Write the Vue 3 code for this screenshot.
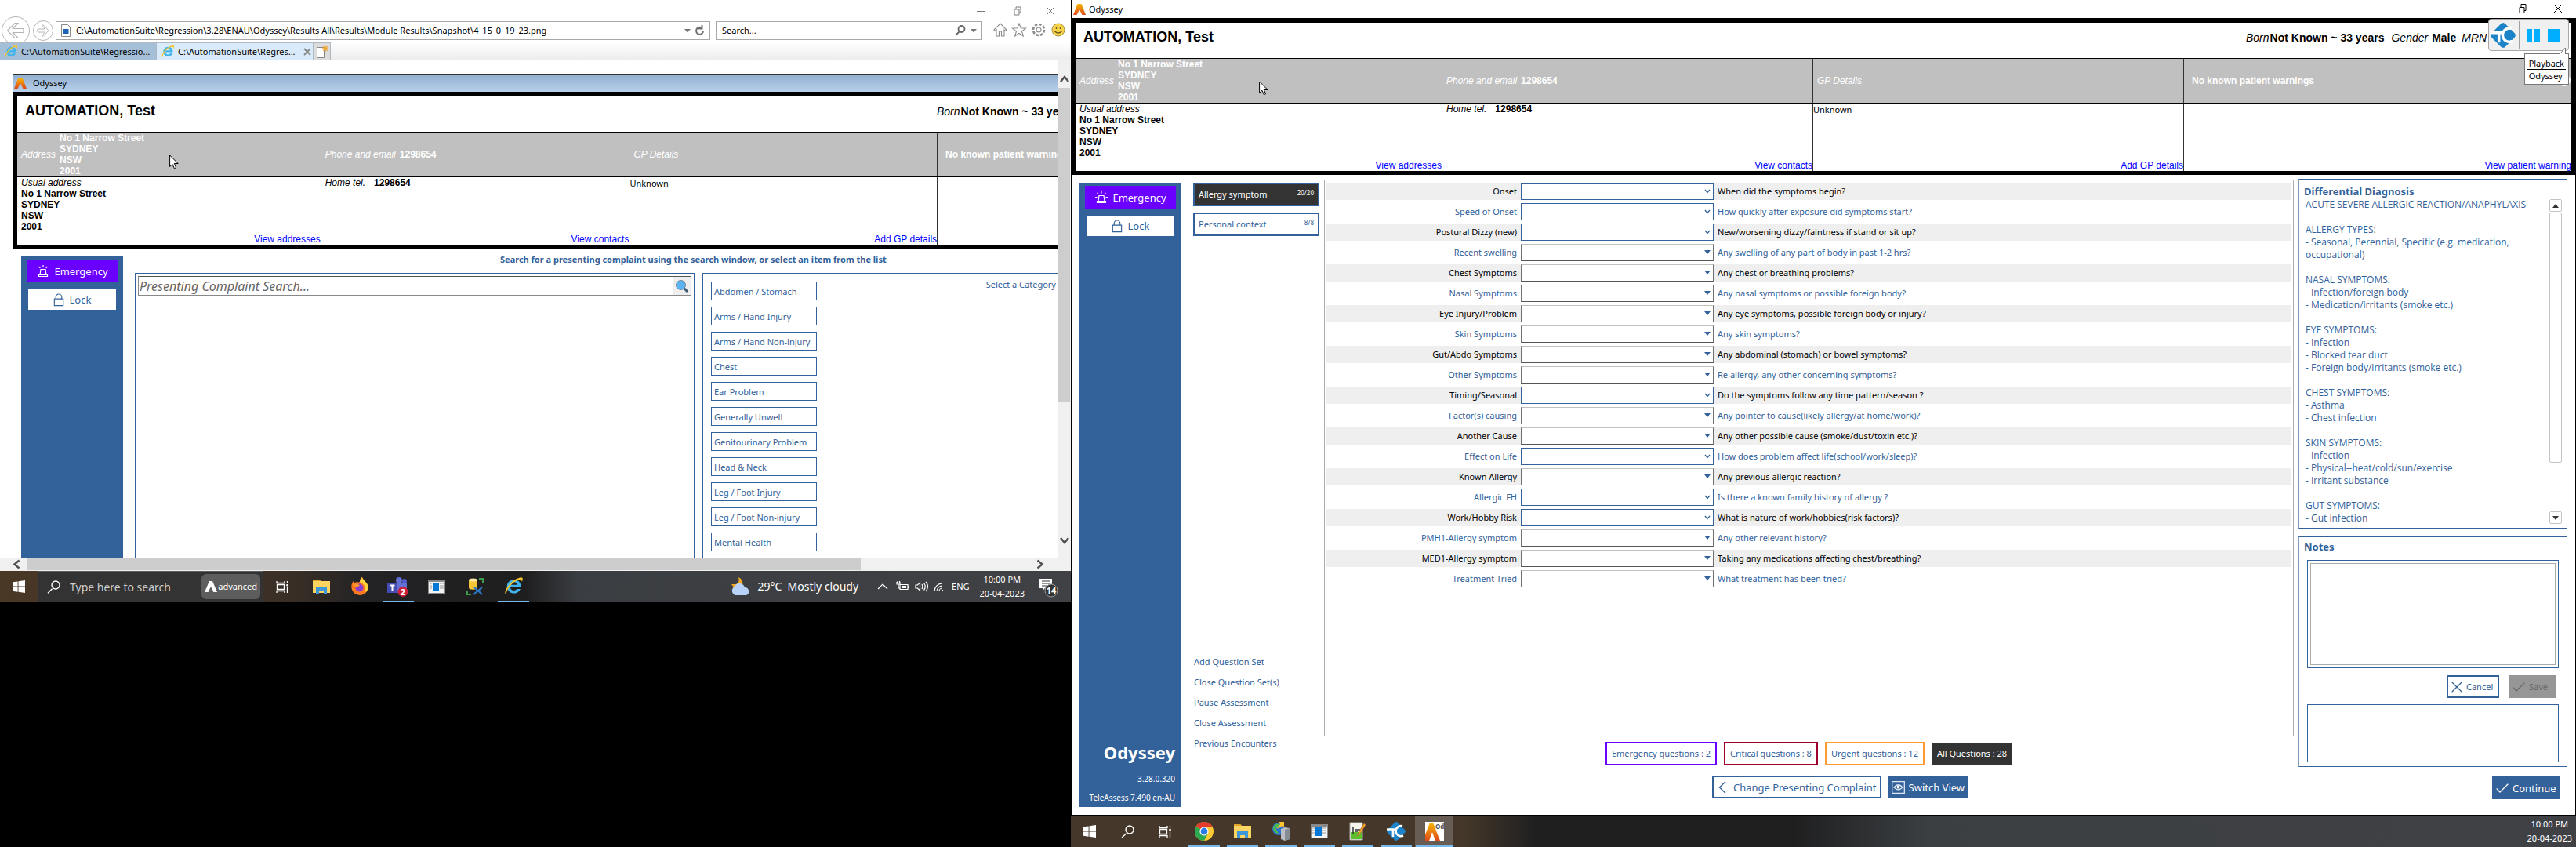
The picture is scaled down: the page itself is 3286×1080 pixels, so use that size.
<script setup>
const addressLines = ['No 1 Narrow Street', 'SYDNEY', 'NSW', '2001']

const categories = [
  'Abdomen / Stomach', 'Arms / Hand Injury', 'Arms / Hand Non-injury', 'Chest',
  'Ear Problem', 'Generally Unwell', 'Genitourinary Problem', 'Head & Neck',
  'Leg / Foot Injury', 'Leg / Foot Non-injury', 'Mental Health'
]

// kind "single" is a blue box with a chevron, "multi" a grey box with a filled arrow
const questions = [
  { label: 'Onset', text: 'When did the symptoms begin?', kind: 'single' },
  { label: 'Speed of Onset', text: 'How quickly after exposure did symptoms start?', kind: 'single' },
  { label: 'Postural Dizzy (new)', text: 'New/worsening dizzy/faintness if stand or sit up?', kind: 'single' },
  { label: 'Recent swelling', text: 'Any swelling of any part of body in past 1-2 hrs?', kind: 'multi' },
  { label: 'Chest Symptoms', text: 'Any chest or breathing problems?', kind: 'multi' },
  { label: 'Nasal Symptoms', text: 'Any nasal symptoms or possible foreign body?', kind: 'multi' },
  { label: 'Eye Injury/Problem', text: 'Any eye symptoms, possible foreign body or injury?', kind: 'multi' },
  { label: 'Skin Symptoms', text: 'Any skin symptoms?', kind: 'multi' },
  { label: 'Gut/Abdo Symptoms', text: 'Any abdominal (stomach) or bowel symptoms?', kind: 'multi' },
  { label: 'Other Symptoms', text: 'Re allergy, any other concerning symptoms?', kind: 'multi' },
  { label: 'Timing/Seasonal', text: 'Do the symptoms follow any time pattern/season ?', kind: 'single' },
  { label: 'Factor(s) causing', text: 'Any pointer to cause(likely allergy/at home/work)?', kind: 'multi' },
  { label: 'Another Cause', text: 'Any other possible cause (smoke/dust/toxin etc.)?', kind: 'multi' },
  { label: 'Effect on Life', text: 'How does problem affect life(school/work/sleep)?', kind: 'single' },
  { label: 'Known Allergy', text: 'Any previous allergic reaction?', kind: 'multi' },
  { label: 'Allergic FH', text: 'Is there a known family history of allergy ?', kind: 'single' },
  { label: 'Work/Hobby Risk', text: 'What is nature of work/hobbies(risk factors)?', kind: 'single' },
  { label: 'PMH1-Allergy symptom', text: 'Any other relevant history?', kind: 'multi' },
  { label: 'MED1-Allergy symptom', text: 'Taking any medications affecting chest/breathing?', kind: 'multi' },
  { label: 'Treatment Tried', text: 'What treatment has been tried?', kind: 'multi' }
]

const actions = ['Add Question Set', 'Close Question Set(s)', 'Pause Assessment', 'Close Assessment', 'Previous Encounters']

const diagnoses = [
  { title: 'ACUTE SEVERE ALLERGIC REACTION/ANAPHYLAXIS', items: [] },
  { title: 'ALLERGY TYPES:', items: ['- Seasonal, Perennial, Specific (e.g. medication, occupational)'] },
  { title: 'NASAL SYMPTOMS:', items: ['- Infection/foreign body', '- Medication/irritants (smoke etc.)'] },
  { title: 'EYE SYMPTOMS:', items: ['- Infection', '- Blocked tear duct', '- Foreign body/irritants (smoke etc.)'] },
  { title: 'CHEST SYMPTOMS:', items: ['- Asthma', '- Chest infection'] },
  { title: 'SKIN SYMPTOMS:', items: ['- Infection', '- Physical--heat/cold/sun/exercise', '- Irritant substance'] },
  { title: 'GUT SYMPTOMS:', items: ['- Gut infection'] }
]

const filePath = 'C:\\AutomationSuite\\Regression\\3.28\\ENAU\\Odyssey\\Results All\\Results\\Module Results\\Snapshot\\4_15_0_19_23.png'
</script>

<template>
  <svg class="defs" aria-hidden="true">
    <defs>
      <linearGradient id="flame" x1="0" y1="0" x2="0" y2="1">
        <stop offset="0" stop-color="#f9b700" /><stop offset="1" stop-color="#dd4a1c" />
      </linearGradient>
      <symbol id="i-logo" viewBox="0 0 16 14"><path d="M5.500 0h5L16 14h-4.500L8 7.500 4.500 14H0z" fill="url(#flame)" /></symbol>
      <symbol id="i-siren" viewBox="0 0 18 18">
        <g fill="none" stroke="#fff" stroke-width="1.200">
          <path d="M3.500 15.500h11v-2h-11zM5 13.500l1-7h6l1 7M9 1v2.500M3.500 3l1.800 1.800M14.500 3l-1.800 1.800M1 8.500h2.500M14.500 8.500H17" />
        </g>
      </symbol>
      <symbol id="i-lock" viewBox="0 0 14 18">
        <path d="M1 7.500h12v9H1zM3 7.500V5a4 4 0 0 1 8 0v2.500" fill="none" stroke="#336199" stroke-width="1.200" />
      </symbol>
      <symbol id="i-cursor" viewBox="0 0 12 19">
        <path d="M.6 1v14.500l3.400-3.200 2.300 5.400 2.300-1-2.300-5.200h4.800z" fill="#fff" stroke="#000" />
      </symbol>
      <symbol id="i-win" viewBox="0 0 16 16">
        <path d="M0 2.300 6.600 1.400v6.200H0zM7.500 1.200 16 0v7.600H7.500zM0 8.500h6.600v6.200L0 13.800zM7.500 8.500H16V16l-8.500-1.200z" fill="#fff" />
      </symbol>
      <symbol id="i-find" viewBox="0 0 17 17">
        <path d="M6.500 10.800 1 16.300M16 6A5 5 0 1 1 6 6a5 5 0 0 1 10 0z" fill="none" stroke="#fff" stroke-width="1.400" />
      </symbol>
      <symbol id="i-tasks" viewBox="0 0 17 17">
        <path d="M1 1v2.500h10V1M1 16v-2.500h10V16M1.500 5.500h9v6h-9zM14.500 1v2.500M14.500 8.500V16" fill="none" stroke="#fff" stroke-width="1.300" />
        <path d="M13.300 5h2.500v2.500h-2.500z" fill="#fff" />
      </symbol>
      <symbol id="i-folder" viewBox="0 0 22 20">
        <path d="M0 1h8l2 2h12v15H0z" fill="#fcd462" /><path d="M0 1h8l2 2H0z" fill="#e0a32a" />
        <path d="M4 10h14v9h-4v-4H8v4H4z" fill="#3e97d8" />
      </symbol>
      <symbol id="i-panel" viewBox="0 0 22 18">
        <path d="M0 0h22v18H0z" fill="#8a8a8a" /><path d="M1 3h20v14H1z" fill="#f4f4f4" />
        <path d="M6 4h8v11H6z" fill="#0078d7" /><path d="M2 5h3M2 8h3M2 11h3M15 5h5M15 8h5M15 11h5" stroke="#999" />
      </symbol>
      <symbol id="i-ie" viewBox="0 0 22 22">
        <path d="M18.500 13.500A7.500 7.500 0 1 1 19 10.500v1.200H7.500a4 4 0 0 0 7.300 1.800zM7.500 9h7.300a3.700 3.700 0 0 0-7.300 0z" fill="#3fb4ec" fill-rule="evenodd" />
        <path d="M3 20C-1 17 8 3 19 1c3 0 2 3 1 5 0-2-1-3-3-2.500C10 5.500 3 14 3 20z" fill="#f5c52b" />
      </symbol>
      <symbol id="i-tc" viewBox="0 0 24 24">
        <path d="M12 0a3 3 0 0 1 2 1l9 9a3 3 0 0 1 0 4l-9 9a3 3 0 0 1-4 0l-9-9a3 3 0 0 1 0-4l9-9a3 3 0 0 1 2-1z" fill="#1c83c8" />
        <path d="M0 9.500h12M8 9.500V19M20 5.500a6.500 6.500 0 1 0 1 12" fill="none" stroke="#fff" stroke-width="2.600" />
      </symbol>
      <symbol id="i-tick" viewBox="0 0 16 12"><path d="M.7 6.500 5 11 15.300.8" fill="none" stroke="currentColor" stroke-width="1.300" /></symbol>
      <symbol id="i-up" viewBox="0 0 12 9"><path d="M1 8l5-6 5 6" fill="none" stroke="#505050" stroke-width="2.500" /></symbol>
    </defs>
  </svg>

  <main class="screens">
    <!-- left monitor: browser showing a saved snapshot -->
    <section class="monitor small">
      <div class="browser">
        <div class="chrome">
          <div class="caption">
            <svg width="102" height="14" viewBox="0 0 102 14"><path d="M1 7.500h10M49 5h6v7h-6zM51 5V2h6v7h-2M90 2l10 10M100 2 90 12" fill="none" stroke="#7a7a7a" /></svg>
          </div>
          <div class="address">
            <button class="nav back" aria-label="Back"><svg width="24" height="22" viewBox="0 0 24 22"><path d="M11 1.500 1.500 11l9.500 9.500h4L8.500 13.500H22v-5H8.500L15 1.500z" fill="none" stroke="#b4b4b4" stroke-width="1.200" /></svg></button>
            <button class="nav fwd" aria-label="Forward"><svg width="16" height="16" viewBox="0 0 16 16"><path d="M8.500 1 15 8l-6.500 7H6l4.500-5H1V6h9.500L6 1z" fill="none" stroke="#b4b4b4" /></svg></button>
            <div class="field url">
              <svg width="12" height="16" viewBox="0 0 12 16"><path d="M.5.500h8l3 3v12H.5z" fill="#fff" stroke="#8a8a8a" /><path d="M2.500 6h7v6h-7z" fill="#1e62b8" /></svg>
              <input aria-label="Address" :value="filePath" readonly />
              <svg width="28" height="14" viewBox="0 0 28 14"><path d="M2 5h8L6 9.500z" fill="#777" /><path d="M26 8a4.500 4.500 0 1 1-2-4.500M24.500 0v4.500H20" fill="none" stroke="#707070" stroke-width="2" /></svg>
            </div>
            <div class="field find">
              <input aria-label="Search" value="Search..." />
              <svg width="28" height="14" viewBox="0 0 28 14"><path d="M12.500 5A4 4 0 1 1 4.500 5a4 4 0 0 1 8 0zM5.500 8.500 1 13" fill="none" stroke="#666" stroke-width="1.800" /><path d="M20 5h8l-4 4.500z" fill="#777" /></svg>
            </div>
            <svg class="tools" width="92" height="18" viewBox="0 0 92 18">
              <g fill="none" stroke="#8a8a8a" stroke-width="1.100">
                <path d="M1 9 9 1l8 8-1.500 1.500L14 9v8h-3.500v-6h-3v6H4V9l-1.500 1.500z" />
                <path d="m33 1 2.200 5.800 6.300.3-5 3.900 1.800 6L33 13.500 27.700 17l1.800-6-5-3.900 6.300-.3z" />
                <circle cx="58" cy="9" r="3" /><circle cx="58" cy="9" r="7" stroke-width="2.600" stroke-dasharray="3.500 2" />
              </g>
              <circle cx="83" cy="9" r="8" fill="#f7d34a" stroke="#a8923c" /><path d="M80.500 5v3M85.500 5v3M78.500 11q4.500 4 9 0" fill="none" stroke="#6d5a1c" stroke-width="1.300" />
            </svg>
          </div>
          <div class="tabs">
            <button class="tab"><svg width="18" height="18"><use href="#i-ie" /></svg>C:\AutomationSuite\Regressio...</button>
            <button class="tab on"><svg width="18" height="18"><use href="#i-ie" /></svg>C:\AutomationSuite\Regres...<svg class="x" width="10" height="10" viewBox="0 0 10 10"><path d="m1 1 8 8M9 1 1 9" stroke="#888" stroke-width="2" /></svg></button>
            <button class="tab new" aria-label="New tab"><svg width="16" height="16" viewBox="0 0 16 16"><path d="M1.500 2.500h9v13h-9z" fill="#fff" stroke="#888" /><path d="M12 0v8M8 4h8M9.200 1.200l5.600 5.600M14.800 1.200 9.200 6.800" stroke="#f0a93a" stroke-width="1.300" /></svg></button>
          </div>
        </div>

        <div class="view">
          <div class="shot">
            <div class="shot-title"><svg width="16" height="14"><use href="#i-logo" /></svg>Odyssey</div>
            <div class="patient">
              <header><h1>AUTOMATION, Test</h1><p><i class="born">Born</i><b>Not Known ~ 33 years</b></p></header>
              <div class="cells heads">
                <div><i>Address</i><b class="addr"><span v-for="l in addressLines" :key="l">{{ l }}</span></b></div>
                <div><i>Phone and email</i><b>1298654</b></div>
                <div><i>GP Details</i></div>
                <div class="warn"><b>No known patient warnings</b></div>
              </div>
              <div class="cells">
                <div><i>Usual address</i><b v-for="l in addressLines" :key="l">{{ l }}</b><a href="#">View addresses</a></div>
                <div><p><i>Home tel.</i><b class="tel">1298654</b></p><a href="#">View contacts</a></div>
                <div class="gp"><p>Unknown</p><a href="#">Add GP details</a></div>
                <div></div>
              </div>
              <svg class="cursor" width="12" height="19"><use href="#i-cursor" /></svg>
            </div>
            <div class="complaint">
              <nav class="side">
                <button class="emergency"><svg width="18" height="18"><use href="#i-siren" /></svg>Emergency</button>
                <button class="lock"><svg width="14" height="17"><use href="#i-lock" /></svg>Lock</button>
              </nav>
              <div class="finder">
                <p class="hint">Search for a presenting complaint using the search window, or select an item from the list</p>
                <div class="panels">
                  <div class="box">
                    <div class="pc">
                      <input aria-label="Presenting complaint" placeholder="Presenting Complaint Search..." />
                      <button aria-label="Search"><svg width="18" height="18" viewBox="0 0 18 18"><path d="m11 11 5 5" stroke="#3b5a76" stroke-width="3" /><circle cx="7.500" cy="7.500" r="6" fill="#5cb4f5" stroke="#6d8295" /></svg></button>
                    </div>
                  </div>
                  <div class="box cats">
                    <div class="list"><button v-for="c in categories" :key="c">{{ c }}</button></div>
                    <span>Select a Category</span>
                  </div>
                </div>
              </div>
            </div>
          </div>
          <div class="vbar"><svg width="12" height="9"><use href="#i-up" /></svg><div class="thumb"></div><svg class="down" width="12" height="9"><use href="#i-up" /></svg></div>
        </div>
        <div class="hbar"><svg class="left" width="12" height="9"><use href="#i-up" /></svg><div class="thumb"></div><svg class="right" width="12" height="9"><use href="#i-up" /></svg></div>
      </div>

      <footer class="taskbar">
        <button class="t48" aria-label="Start"><svg width="16" height="16"><use href="#i-win" /></svg></button>
        <div class="search">
          <svg width="17" height="17"><use href="#i-find" /></svg>
          <input aria-label="Taskbar search" value="Type here to search" />
          <span class="adv"><svg width="16" height="14" viewBox="0 0 16 14"><path d="M6 0h4l6 14h-4.500L8 7 4.500 14H0z" fill="#fff" /></svg>advanced</span>
        </div>
        <button class="t49" aria-label="Task view"><svg width="17" height="17"><use href="#i-tasks" /></svg></button>
        <button class="t49" aria-label="Explorer"><svg width="22" height="20"><use href="#i-folder" /></svg></button>
        <button class="t49" aria-label="Firefox"><svg width="24" height="24" viewBox="0 0 24 24"><path d="M12 23A11 11 0 0 1 1.500 10c.5-2.500 1.500-4 2.500-5 .3 1.200.8 1.800 1.500 2.200C8 5.500 10 7 12 6c0-2.500 1-4.500 3-6 .5 3 4 5 6 8 4 7-1 15-9 15z" fill="#ff7a1f" /><path d="M15 0c.5 3 4 5 6 8 3 5 1 10-3 12 3-7 0-11-6-14 0-2.500 1-4.500 3-6z" fill="#ffd23e" /><circle cx="11.500" cy="13.500" r="5" fill="#8b3fd1" /><path d="M5 9c3-1 6 0 7 2-2 0-3 1-3 2-2 0-4-2-4-4z" fill="#ff9a2a" /></svg></button>
        <button class="t49 run" aria-label="Teams"><svg width="27" height="25" viewBox="0 0 27 25"><circle cx="15" cy="4" r="4" fill="#6470d6" /><circle cx="22" cy="5" r="3" fill="#525ccd" /><path d="M10 8h15v8a5 5 0 0 1-8 4h-7z" fill="#6470d6" /><path d="M0 7h13v13H0z" fill="#454db4" /><path d="M3.500 10.500h6M6.500 10.500V17" stroke="#fff" stroke-width="2" /><circle cx="20" cy="18.500" r="6.500" fill="#cb1f3a" /><text x="20" y="22.500" text-anchor="middle" fill="#fff" class="tiny">2</text></svg></button>
        <button class="t49" aria-label="Control panel"><svg width="22" height="18"><use href="#i-panel" /></svg></button>
        <button class="t49" aria-label="Database tool"><svg width="22" height="23" viewBox="0 0 22 23"><path d="M3 2.500v10c0 3 11 3 11 0v-10z" fill="#f5c437" /><ellipse cx="8.500" cy="2.500" rx="5.500" ry="2" fill="#ffe9a0" /><path d="M16 1h5v5M1 16v5h5" fill="none" stroke="#3c9c4a" stroke-width="2" /><path d="m9 21 11-9M10 12l10 9" stroke="#2c78c8" stroke-width="2.200" /></svg></button>
        <button class="t49 run" aria-label="Internet Explorer"><svg width="26" height="26"><use href="#i-ie" /></svg></button>
        <div class="tray">
          <svg width="26" height="24" viewBox="0 0 26 24"><path d="M10 0c6 3 7 9 3 13H4l-3-4h6c4-2 4-5 3-9z" fill="#f5a623" /><path d="M6 23a6 6 0 0 1-1-11 7 7 0 0 1 13 1 5.200 5.200 0 0 1 2 10z" fill="#b9d2f7" /></svg>
          <span class="weather">29°C&nbsp; Mostly cloudy</span>
          <svg width="84" height="16" viewBox="0 0 84 16">
            <g fill="none" stroke="#fff" stroke-width="1.200">
              <path d="m1 11 6-6 6 6M29 5.500h10v6H29zM25 2v3h4V2M26 1v2M28.500 1v2M27 5v5h2M49 6h2.500l3-3v10l-3-3H49zM57 5q2 3 0 6M59.500 3.500q3.500 4.500 0 9M62 2q5 6 0 12M73 14A10 10 0 0 1 83 4M76 14a7 7 0 0 1 7-7M79 14a4 4 0 0 1 4-4" />
            </g>
            <path d="M31 7h6v3h-6zM39 7h2v3h-2zM82 12h2v2h-2z" fill="#fff" />
          </svg>
          <span class="lang">ENG</span>
          <span class="clock"><span>10:00 PM</span><span>20-04-2023</span></span>
          <svg class="note" width="26" height="27" viewBox="0 0 26 27"><path d="M1 3h16v12H8l-3 3v-3H1z" fill="#fff" /><path d="M4 6h10M4 9h10M4 12h7" stroke="#333" /><circle cx="16" cy="18" r="8" fill="#333" stroke="#999" /><text x="16" y="22" text-anchor="middle" fill="#fff" class="tiny">14</text></svg>
        </div>
      </footer>
    </section>

    <!-- right monitor: the live application -->
    <section class="monitor large">
      <div class="app-title">
        <svg width="16" height="14"><use href="#i-logo" /></svg><span>Odyssey</span>
        <svg class="wc" width="102" height="14" viewBox="0 0 102 14"><path d="M1 7.500h10M47 5.500h6v7h-6zM49 5.500v-4h6v8h-2M91 2l10 10M101 2 91 12" fill="none" stroke="#000" /></svg>
      </div>
      <div class="patient wide">
        <header><h1>AUTOMATION, Test</h1><p><i class="born">Born</i><b>Not Known ~ 33 years</b><i class="gap">Gender</i><b class="sm">Male</b><i class="sm2">MRN</i> <i>no.</i></p></header>
        <div class="cells heads">
          <div><i>Address</i><b class="addr"><span v-for="l in addressLines" :key="l">{{ l }}</span></b></div>
          <div><i>Phone and email</i><b>1298654</b></div>
          <div><i>GP Details</i></div>
          <div class="warn"><b>No known patient warnings</b><span class="pin"></span></div>
        </div>
        <div class="cells">
          <div><i>Usual address</i><b v-for="l in addressLines" :key="l">{{ l }}</b><a href="#">View addresses</a></div>
          <div><p><i>Home tel.</i><b class="tel">1298654</b></p><a href="#">View contacts</a></div>
          <div class="gp"><p>Unknown</p><a href="#">Add GP details</a></div>
          <div><a href="#">View patient warning</a></div>
        </div>
        <svg class="cursor" width="12" height="19"><use href="#i-cursor" /></svg>
        <div class="playback">
          <div class="pb-bar">
            <svg width="32" height="32"><use href="#i-tc" /></svg>
            <span class="sep"></span>
            <button aria-label="Pause"><svg width="16" height="16"><path d="M0 0h6v16H0zM9 0h7v16H9z" fill="#00aeff" /></svg></button>
            <button aria-label="Stop"><svg width="16" height="16"><path d="M0 0h16v16H0z" fill="#00aeff" /></svg></button>
          </div>
          <svg class="tip" width="8" height="8" viewBox="0 0 8 8"><path d="M0 8 7.500 0v8" fill="#fff" stroke="#777" /></svg>
          <div class="pb-note"><span>Playback</span><span>Odyssey</span></div>
        </div>
      </div>

      <div class="work">
        <nav class="side">
          <button class="emergency"><svg width="18" height="18"><use href="#i-siren" /></svg>Emergency</button>
          <button class="lock"><svg width="14" height="17"><use href="#i-lock" /></svg>Lock</button>
          <div class="about"><strong>Odyssey</strong><span>3.28.0.320</span><span>TeleAssess 7.490 en-AU</span></div>
        </nav>
        <div class="sets">
          <button class="on">Allergy symptom<small>20/20</small></button>
          <button>Personal context<small>8/8</small></button>
          <ul><li v-for="a in actions" :key="a"><a href="#">{{ a }}</a></li></ul>
        </div>
        <div class="centre">
          <form class="questions">
            <div v-for="(q, i) in questions" :key="q.label" class="q">
              <label :for="'q' + i">{{ q.label }}</label>
              <div class="pick" :class="q.kind">
                <select :id="'q' + i"></select>
                <svg v-if="q.kind === 'single'" width="8" height="6" viewBox="0 0 8 6"><path d="M1 1l3 3.500L7 1" fill="none" stroke="#336199" stroke-width="1.300" /></svg>
                <svg v-else width="8" height="5" viewBox="0 0 8 5"><path d="M0 0h8L4 5z" fill="#336199" /></svg>
              </div>
              <span>{{ q.text }}</span>
            </div>
          </form>
          <div class="filters">
            <button class="f1">Emergency questions : 2</button>
            <button class="f2">Critical questions : 8</button>
            <button class="f3">Urgent questions : 12</button>
            <button class="f4">All Questions : 28</button>
          </div>
          <div class="moves">
            <button class="line"><svg width="11" height="16" viewBox="0 0 11 16"><path d="M9 .7 1.500 8 9 15.300" fill="none" stroke="#336199" stroke-width="1.400" /></svg>Change Presenting Complaint</button>
            <button class="solid"><svg width="17" height="16" viewBox="0 0 17 16"><path d="M.7.700h15.600v14.600H.7zM3 8q5.500-6.500 11 0Q8.500 13.500 3 8z" fill="none" stroke="#dfe8f2" stroke-width="1.300" /><circle cx="8.500" cy="7.500" r="2" fill="#fff" /></svg>Switch View</button>
          </div>
        </div>
        <aside>
          <div class="card dd">
            <h2>Differential Diagnosis</h2>
            <div class="scroll">
              <div class="dx">
                <div v-for="d in diagnoses" :key="d.title" class="grp"><p>{{ d.title }}</p><p v-for="t in d.items" :key="t">{{ t }}</p></div>
              </div>
              <div class="sb">
                <button aria-label="Scroll up"><svg width="8" height="5"><path d="M0 5h8L4 0z" fill="#333" /></svg></button>
                <div></div>
                <button aria-label="Scroll down"><svg width="8" height="5"><path d="M0 0h8L4 5z" fill="#333" /></svg></button>
              </div>
            </div>
          </div>
          <div class="card notes">
            <h2 id="notes">Notes</h2>
            <div class="edit"><textarea aria-labelledby="notes"></textarea></div>
            <div class="acts">
              <button class="line"><svg width="14" height="14" viewBox="0 0 14 14"><path d="m.7.700 12.600 12.600M13.300.700.700 13.300" stroke="#336199" stroke-width="1.300" /></svg>Cancel</button>
              <button class="save" disabled><svg width="16" height="12"><use href="#i-tick" /></svg>Save</button>
            </div>
            <div class="saved"></div>
          </div>
          <button class="solid go"><svg width="16" height="12"><use href="#i-tick" /></svg>Continue</button>
        </aside>
      </div>

      <footer class="taskbar">
        <button class="t48" aria-label="Start"><svg width="16" height="16"><use href="#i-win" /></svg></button>
        <button class="t48" aria-label="Search"><svg width="17" height="17"><use href="#i-find" /></svg></button>
        <button class="t49" aria-label="Task view"><svg width="17" height="17"><use href="#i-tasks" /></svg></button>
        <button class="t49 run" aria-label="Chrome"><svg width="24" height="24" viewBox="0 0 24 24"><circle cx="12" cy="12" r="12" fill="#fcc934" /><path d="M12 12 1.600 6A12 12 0 0 1 22.400 6H12z" fill="#e33b2e" /><path d="M1.600 6A12 12 0 0 0 12 24l5-9-5-3z" fill="#2da94f" /><circle cx="12" cy="12" r="5.600" fill="#fff" /><circle cx="12" cy="12" r="4.400" fill="#2a7ae8" /></svg></button>
        <button class="t49 run" aria-label="Explorer"><svg width="22" height="20"><use href="#i-folder" /></svg></button>
        <button class="t49 run" aria-label="Remote server"><svg width="24" height="24" viewBox="0 0 24 24"><circle cx="9" cy="9" r="8" fill="#2d74cf" /><path d="M2 6q4-5 8-3-1 4-5 4 1 4 4 8-7-1-7-9z" fill="#4cbf45" /><path d="M9 0h7v7l-2-2q-4 4-8 3 4-2 5-5z" fill="#ffc32e" /><path d="m12 9 5-2 6 1v14l-6 2-5-2z" fill="#b9bec4" /><path d="M17 10v14l6-2V8z" fill="#868c93" /></svg></button>
        <button class="t49 run" aria-label="Control panel"><svg width="22" height="18"><use href="#i-panel" /></svg></button>
        <button class="t49 run" aria-label="Notepad++"><svg width="22" height="24" viewBox="0 0 22 24"><path d="M1 1h16v22H1z" fill="#f4f6ee" stroke="#aaa" /><path d="M2 13h14v9H2z" fill="#5fbf2d" /><path d="M5 7v8M8 10h7M8 12h3" stroke="#333" stroke-width="1.500" /><path d="m10 18 2-5 7-11 2 2-7 11z" fill="#f0a41c" stroke="#a55" stroke-width=".5" /></svg></button>
        <button class="t49 run" aria-label="TestComplete"><svg width="24" height="24"><use href="#i-tc" /></svg></button>
        <button class="t49 run on" aria-label="Odyssey"><svg width="24" height="24" viewBox="0 0 24 24"><path d="M0 0h24v24H0z" fill="#fff" /><path d="M6 1h4l9 23h-6L9 13 5 24H0V16z" fill="url(#flame)" /><text x="13" y="9" class="od">Od</text></svg></button>
        <div class="tray"><span class="clock"><span>10:00 PM</span><span>20-04-2023</span></span></div>
      </footer>
    </section>
  </main>
</template>

<style>
body { background: #000; }
</style>

<style scoped>
.defs { position: absolute; width: 0; height: 0; }
* { box-sizing: border-box; }
h1, h2, p, ul { margin: 0; padding: 0; }
ul { list-style: none; }
a { text-decoration: none; }
svg { flex: none; }
button, input, select, textarea { font: inherit; color: inherit; margin: 0; padding: 0; border: 0; background: none; border-radius: 0; outline: 0; min-width: 0; }
button { display: flex; align-items: center; white-space: nowrap; }

.screens { display: grid; grid-template-columns: 1366fr 1920fr; align-items: start; background: #000; font: 11px/14px "Noto Sans", "Open Sans", sans-serif; color: #000; }
.monitor { display: flex; flex-direction: column; min-width: 0; overflow: hidden; background: #fff; }
.small { aspect-ratio: 1366 / 768; }
.large { aspect-ratio: 1920 / 1080; }

/* browser */
.browser { flex: 1; min-height: 0; display: flex; flex-direction: column; }
.caption { display: flex; justify-content: flex-end; height: 27px; padding: 7px 19px 0 0; }
.address { display: flex; align-items: flex-start; height: 27px; padding-left: 2px; position: relative; z-index: 1; }
.nav { flex: none; justify-content: center; border: 1px solid #b4b4b4; border-radius: 50%; background: #fff; }
.back { width: 36px; height: 36px; margin-top: -6px; }
.fwd { width: 26px; height: 26px; margin: -1px 3px 0 4px; }
.field { display: flex; align-items: center; gap: 7px; height: 24px; padding: 0 6px; border: 1px solid #a8a8a8; background: #fff; }
.field input { flex: 1; }
.url { flex: 1; }
.find { width: 340px; margin: 0 14px 0 7px; padding-left: 7px; }
.tools { margin: 2px 7px 0 0; }
.tabs { display: flex; height: 23px; background: linear-gradient(#fff, #ececec); position: relative; z-index: 2; }
.tab { width: 200px; gap: 4px; padding-left: 5px; background: #a5bfd8; border: 1px solid #b0b8c0; border-width: 1px 1px 0 0; }
.tab.on { background: #d9ebfa; }
.tab .x { margin-left: 6px; }
.tab.new { width: 22px; padding-left: 3px; background: #dcdcdc; }
.view { flex: 1; min-height: 0; display: flex; justify-content: space-between; }
.shot { flex: 1; min-width: 0; margin: 17px 0 0 16px; overflow: hidden; display: flex; flex-direction: column; }
.shot-title { display: flex; align-items: center; gap: 8px; height: 23px; padding-left: 2px; border-top: 1px solid #333; background: linear-gradient(#93afd0, #b7d0eb); }
.vbar { display: flex; flex-direction: column; align-items: center; width: 17px; padding: 19px 0 17px; background: #f0f0f0; }
.vbar .thumb { width: 15px; height: 400px; margin: 7px 0 auto; background: #cdcdcd; }
.down { transform: rotate(180deg); }
.left { transform: rotate(-90deg); }
.right { transform: rotate(90deg); margin-left: auto; }
.hbar { display: flex; align-items: center; height: 17px; padding: 0 33px 0 15px; background: #f0f0f0; }
.hbar .thumb { width: 1064px; height: 15px; margin-left: 7px; background: #cdcdcd; }

/* patient banner */
.patient { position: relative; border: solid #000; border-width: 6px 0 5px 6px; background: #fff; font: 12px/14px "Liberation Sans", Arial, sans-serif; }
.patient.wide { border-right-width: 6px; }
.patient header { display: flex; justify-content: space-between; height: 45px; padding: 8px 0 0 10px; font-size: 14px; line-height: 20px; white-space: nowrap; }
.patient h1 { font-size: 18px; line-height: 20px; }
.patient p { white-space: nowrap; }
.small .patient header p { width: 154px; margin-top: 1px; }
.wide header p { width: 415px; margin-top: 1px; }
.born { margin-right: 1px; }
.gap { margin-left: 9px; }
.sm { margin-left: 5px; }
.sm2 { margin-left: 7px; }
.cells { display: grid; grid-template-columns: 388fr 394fr 393fr 153fr; background: #fff; }
.wide .cells { grid-template-columns: 468fr 473fr 473fr 494fr; }
.cells > div { display: flex; flex-direction: column; min-width: 0; min-height: 86px; padding: 0 0 0 5px; border-right: 1px solid #333; white-space: nowrap; }
.cells > div:last-child { border-right: 0; }
.cells a { margin-top: auto; align-self: flex-end; color: #00f; }
.cells .gp { padding-left: 0; }
.gp p { padding-top: 1px; font: 11px/14px "Noto Sans", sans-serif; }
.tel { margin-left: 11px; }
.heads { border: solid #000; border-width: 1px 0; background: #c0c0c0; color: #fff; }
.heads > div { flex-direction: row; align-items: center; gap: 5px; min-height: 56px; overflow: hidden; }
.heads > .warn { padding-left: 10px; }
.addr span { display: block; }
.pin { align-self: stretch; position: relative; width: 20px; margin-left: auto; border-left: 1px solid #000; }
.pin::after { content: ""; position: absolute; left: 3px; top: 20px; width: 15px; height: 15px; border-radius: 50%; background: #fff; }
.cursor { position: absolute; left: 194px; top: 74px; }
.wide .cursor { left: 234px; }

/* playback toolbar over the banner */
.playback { position: absolute; right: 3px; top: -5px; display: flex; flex-direction: column; align-items: flex-end; }
.pb-bar { display: flex; align-items: center; gap: 10px; height: 41px; padding: 0 10px 0 2px; border: 1px solid #a8a8a8; border-radius: 4px; background: #f0f0f0; }
.sep { width: 1px; height: 35px; margin-left: -6px; background: #a0a0a0; }
.tip { position: absolute; right: 4px; top: 37px; z-index: 1; }
.pb-note { display: flex; flex-direction: column; margin-top: 3px; padding: 4px 3px 3px; border: 1px solid #777; background: #fff; font: 11px/15px "Noto Sans", sans-serif; }
.pb-note span { padding: 0 2px; }
.pb-note span + span { border-top: 1px solid #000; }

/* blue sidebar, shared by both screens */
.side { display: flex; flex-direction: column; align-items: center; flex: none; width: 130px; padding-top: 4px; background: #336199; font-size: 13px; color: #fff; }
.emergency { justify-content: center; gap: 5px; width: 116px; height: 29px; background: #6a00ff; }
.lock { justify-content: center; gap: 7px; width: 112px; height: 26px; margin-top: 9px; background: #fff; color: #336199; }

/* complaint search */
.complaint { flex: 1; min-height: 0; display: flex; gap: 15px; padding: 10px 0 0 10px; border-left: 1px solid #000; background: #fff; color: #336199; }
.finder { flex: 1; min-width: 0; display: flex; flex-direction: column; }
.hint { height: 21px; padding-left: 466px; line-height: 8px; font-weight: 700; white-space: nowrap; }
.panels { flex: 1; min-height: 0; display: grid; grid-template-columns: 714fr 453fr; gap: 10px; }
.box { border: solid #336199; border-width: 1px 1px 0; padding: 3px; min-height: 0; overflow: hidden; }
.pc { display: flex; height: 25px; border: 1px solid #888; border-top-color: #555; color: #555; font-size: 16px; font-style: italic; }
.pc input { flex: 1; padding-left: 1px; }
.pc input::placeholder { color: #666; opacity: 1; }
.pc button { width: 23px; justify-content: center; border-left: 1px solid #bbb; background: #eee; }
.cats { display: flex; justify-content: space-between; align-items: flex-start; padding: 10px 2px 0 10px; border-right: 0; }
.cats > span { line-height: 8px; }
.list { display: flex; flex-direction: column; gap: 8px; }
.list button { width: 135px; height: 24px; padding: 1px 0 0 3px; border: 1px solid #336199; }

/* taskbars */
.taskbar { display: flex; align-items: stretch; height: 40px; flex: none; color: #fff; background: linear-gradient(90deg, #45382a 0, #45382a 26%, #1f1f20 31%, #1f1f20 48%, #3b3f42 57%, #404145 100%); }
.small .taskbar { background: linear-gradient(90deg, #4a3826 0, #3a2f26 27%, #232325 34%, #1e1e1f 49%, #3a3d41 54%, #404145 100%); }
.taskbar button { justify-content: center; }
.t48 { width: 48px; }
.t49 { width: 49px; }
.run { background: linear-gradient(#76b9ed, #76b9ed) center bottom / 40px 2px no-repeat; }
.run.on { background: linear-gradient(#76b9ed, #76b9ed) center bottom / 48px 2px no-repeat #685d55; }
.search { display: flex; align-items: center; gap: 12px; width: 288px; padding: 0 3px 0 11px; border: 1px solid #5c5c5c; background: #333; color: #ccc; font-size: 14px; }
.search input { flex: 1; }
.adv { display: flex; align-items: center; gap: 1px; height: 32px; padding: 0 4px; border-radius: 6px; background: #5d5d5d; color: #fff; font-size: 11px; }
.tray { display: flex; align-items: center; margin-left: auto; padding-right: 5px; }
.small .tray { padding-right: 15px; }
.weather { margin: 0 24px 0 8px; font-size: 14px; white-space: nowrap; }
.lang { margin: 0 13px 0 11px; }
.clock { display: flex; flex-direction: column; gap: 4px; text-align: center; }
.note { margin-left: 18px; }
.tiny { font: 700 11px "Noto Sans", sans-serif; }
.od { font: 700 8px "Noto Sans", sans-serif; fill: #555; }

/* live application */
.app-title { display: flex; align-items: center; gap: 4px; height: 23px; padding-left: 2px; border-left: 1px solid #000; }
.wc { margin-left: auto; margin-right: 17px; margin-bottom: 2px; }
.work { flex: 1; min-height: 0; display: flex; padding: 10px; border: solid #000; border-width: 0 1px 1px; color: #336199; }
.about { display: flex; flex-direction: column; align-items: flex-end; gap: 10px; width: 100%; margin-top: auto; padding: 0 8px 5px 0; font-size: 10px; line-height: 14px; }
.about strong { margin-bottom: 4px; font-size: 22px; line-height: 26px; }
.sets { display: flex; flex-direction: column; gap: 8px; width: 161px; flex: none; margin-left: 15px; }
.sets button { justify-content: space-between; align-items: flex-start; height: 30px; padding: 6px 5px 0; border: 2px solid #336199; }
.sets button.on { background: #333; color: #fff; }
.sets small { font-size: 8px; line-height: 10px; }
.sets ul { margin: auto 0 68px 1px; }
.sets li { line-height: 26px; }
.sets a { color: inherit; }
.centre { flex: 1; min-width: 0; display: flex; flex-direction: column; margin: -4px 6px 0; }
.questions { flex: 1; min-height: 0; padding: 3px 3px 0 2px; border: 1px solid #ababab; }
.q { display: flex; align-items: center; height: 22px; margin-bottom: 4px; }
.q:nth-child(odd) { background: #efefef; color: #000; }
.q label { width: 243px; text-align: right; }
.pick { position: relative; width: 246px; height: 22px; margin: 0 5px; }
.pick select { appearance: none; width: 100%; height: 100%; background: #fff; border: 1px solid #336199; }
.multi select { border-color: #c0c0c0 #707070 #555; }
.pick svg { position: absolute; right: 4px; top: 8px; pointer-events: none; }
.filters { display: flex; justify-content: center; align-items: center; gap: 9px; margin-top: 7px; }
.filters button { height: 30px; border: 2px solid; justify-content: center; }
.filters .f1 { width: 142px; border-color: #6a00ff; }
.filters .f2 { width: 120px; border-color: #a0002c; }
.filters .f3 { width: 127px; border-color: #ff9a33; }
.filters .f4 { width: 103px; height: 28px; border: 0; background: #333; color: #fff; }
.f1, .f2, .f3 { color: #336199; }
.moves { display: flex; justify-content: center; gap: 8px; margin: 13px 0 11px; padding-left: 80px; }
.line, .solid, .save { height: 29px; font-size: 13px; }
.line { gap: 8px; padding: 0 4px 0 6px; border: 2px solid #336199; }
.solid { gap: 5px; padding: 0 5px; background: #336199; color: #fff; }
aside { display: flex; flex-direction: column; width: 343px; flex: none; margin-top: -5px; }
.card { border: 1px solid #336199; border-left-color: #7f9fc4; }
h2 { padding-left: 6px; font-size: 13px; line-height: 18px; }
.dd { display: flex; flex-direction: column; height: 446px; padding: 6px 6px 1px 0; }
.scroll { flex: 1; min-height: 0; display: flex; justify-content: space-between; }
.dx { width: 300px; padding-left: 8px; overflow: hidden; font: 12px/16px "Open Sans", sans-serif; }
.grp { margin-bottom: 16px; }
.grp:last-child { margin-bottom: 0; }
.grp p { max-width: 270px; }
.grp:first-child p { max-width: none; white-space: nowrap; }
.sb { display: flex; flex-direction: column; width: 16px; margin: 1px 0 4px; }
.sb button { height: 16px; justify-content: center; border: 1px solid #c4c4c4; border-radius: 2px; }
.sb div { flex: 1; margin: 1px 0 62px; border: 1px solid #c4c4c4; border-radius: 2px; }
.notes { display: flex; flex-direction: column; margin-top: 10px; height: 294px; padding: 3px 10px 5px; }
.notes h2 { margin-left: -10px; }
.edit { flex: 1; display: flex; margin-top: 8px; padding: 3px; border: 1px solid #336199; }
.edit textarea { flex: 1; resize: none; border: 1px solid #ababab; }
.acts { display: flex; justify-content: flex-end; gap: 12px; margin: 9px 4px 8px 0; }
.acts .line, .acts .save { gap: 5px; font-size: 11px; }
.acts .line { width: 67px; padding: 0 4px; }
.save { width: 60px; padding: 0 5px; background: #969696; color: #6a6a6a; }
.saved { height: 74px; border: 1px solid #336199; }
.go { align-self: flex-end; width: 87px; margin: 12px 9px 0 0; }
</style>
